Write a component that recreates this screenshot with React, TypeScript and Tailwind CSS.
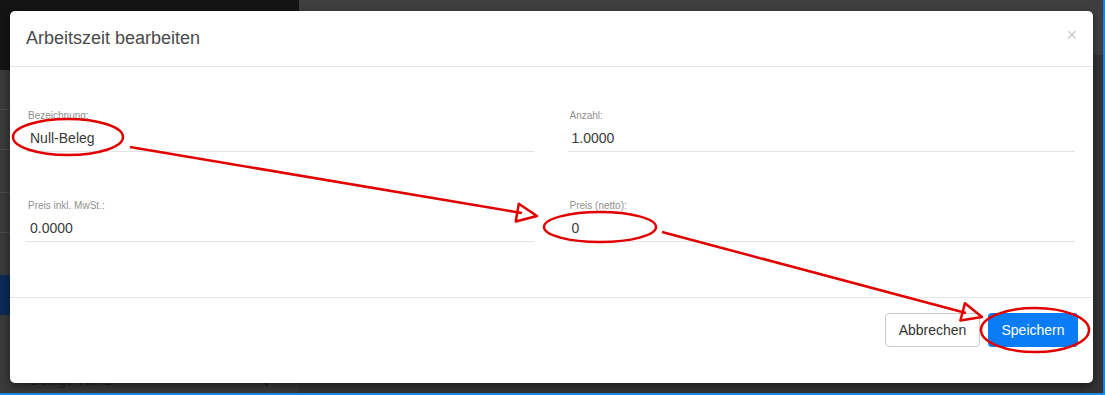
import React from "react";

function Field({ label, value, valueClass }: { label: string; value: string; valueClass?: string }) {
  return (
    <div className="flex flex-col">
      <div className="h-[13px] pl-[2px] text-[10px] leading-[14px] text-[#8f8f8f]">{label}</div>
      <div className={"h-[30px] pb-[5px] pl-[4px] flex items-end border-b border-[#e2e2e2] text-[14px] leading-[16px] text-[#3a3a3a] " + (valueClass ?? "")}>{value}</div>
    </div>
  );
}

function arrowHead(tx: number, ty: number, dx: number, dy: number) {
  const len = Math.hypot(dx, dy);
  const ux = dx / len, uy = dy / len;
  const bx = tx - 20 * ux, by = ty - 20 * uy;
  const nx = -uy, ny = ux;
  return `${tx},${ty} ${bx + 9 * nx},${by + 9 * ny} ${bx - 9 * nx},${by - 9 * ny}`;
}

export default function App() {
  return (
    <div className="relative w-[1105px] h-[395px] overflow-hidden bg-[#3c3c3c]" style={{ fontFamily: '"Liberation Sans", Arial, sans-serif' }}>
      {/* background page */}
      <div className="flex h-[393px] border-r-[2px] border-[#1e7fd6]">
        <div className="w-[299px] flex flex-col bg-[#3a3a3a]">
          <div className="h-[70px] bg-[#141414]" />
          <div className="h-[40px] border-b border-[#4a4a4a]" />
          <div className="h-[40px] border-b border-[#4a4a4a]" />
          <div className="h-[43px] border-b border-[#4a4a4a]" />
          <div className="h-[40px] border-b border-[#4a4a4a]" />
          <div className="h-[42px]" />
          <div className="h-[40px] bg-[#0b2a55]" />
          <div className="flex-1 flex items-end px-[30px] pb-[2px] text-[14px] text-[#222] justify-between">
            <span>Belege von 1</span>
            <span className="text-[10px]">▾</span>
          </div>
        </div>
        <div className="flex-1 flex flex-col bg-[#3d3d3d]">
          <div className="h-[55px] bg-[#3f3f3f]" />
          <div className="flex-1 bg-[#333]" />
        </div>
      </div>
      <div className="h-[2px] bg-[#1e88e5]" />

      {/* modal */}
      <div className="absolute left-[10px] top-[11px] w-[1083px] h-[372px] bg-white rounded-[5px] shadow-[0_3px_9px_rgba(0,0,0,0.5)] flex flex-col">
        <div className="h-[56px] flex items-center justify-between pl-[16px] pr-[16px] border-b border-[#e5e5e5]">
          <span className="text-[18px] text-[#4a4a4a]">Arbeitszeit bearbeiten</span>
          <span className="text-[18px] text-[#c8c8c8] leading-none pb-[8px]">×</span>
        </div>
        <div className="flex-1 pl-[16px] pr-[18px] pt-[42px] grid grid-cols-2 gap-x-[34px] gap-y-[47px] content-start">
          <Field label="Bezeichnung:" value="Null-Beleg" />
          <Field label="Anzahl:" value="1.0000" valueClass="pl-[2px]" />
          <Field label="Preis inkl. MwSt.:" value="0.0000" valueClass="pl-[3px]" />
          <Field label="Preis (netto):" value="0" valueClass="pl-[3px]" />
        </div>
        <div className="h-[86px] border-t border-[#e5e5e5] flex justify-end items-start pt-[15px] pr-[15px] gap-[8px]">
          <button className="h-[34px] w-[95px] rounded-[4px] border border-[#ccc] bg-white text-[14px] text-[#333]">Abbrechen</button>
          <button className="h-[34px] w-[90px] rounded-[4px] bg-[#0a7cf6] text-[14px] text-white">Speichern</button>
        </div>
      </div>

      {/* annotations */}
      <svg className="absolute left-0 top-0" width="1105" height="395" viewBox="0 0 1105 395" fill="none">
        <g stroke="#e10000" strokeWidth="2.5" strokeLinejoin="round">
          <ellipse cx="68" cy="137" rx="55" ry="18" />
          <ellipse cx="600" cy="227" rx="56" ry="15" />
          <ellipse cx="1035" cy="330" rx="54" ry="22" />
          <line x1="130" y1="147" x2="522" y2="213" />
          <polygon points={arrowHead(537, 216, 407, 69)} />
          <line x1="662" y1="232" x2="966" y2="313" />
          <polygon points={arrowHead(982, 317, 320, 85)} />
        </g>
      </svg>
    </div>
  );
}
